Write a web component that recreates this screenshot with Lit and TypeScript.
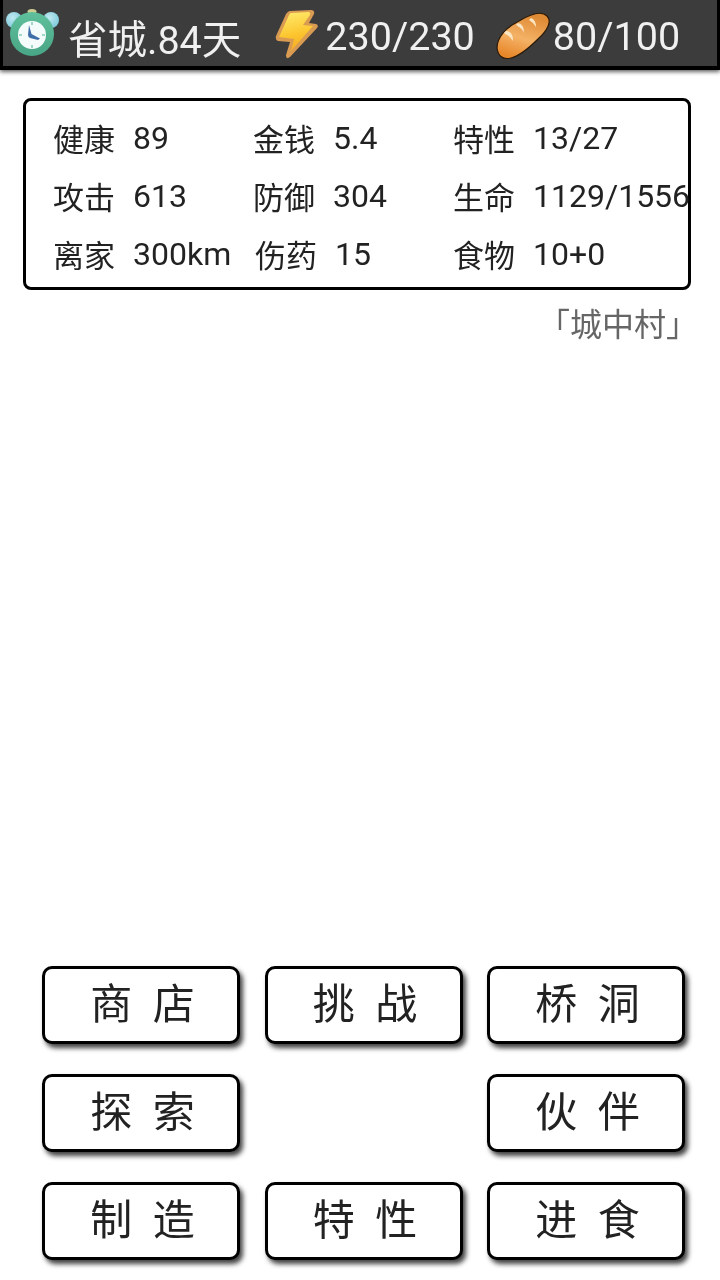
import { LitElement, html, css, svg } from "lit";
import { customElement } from "lit/decorators.js";

const STATS: [string, string][] = [
  ["健康", "89"], ["金钱", "5.4"], ["特性", "13/27"],
  ["攻击", "613"], ["防御", "304"], ["生命", "1129/1556"],
  ["离家", "300km"], ["伤药", "15"], ["食物", "10+0"],
];
const BUTTONS = ["商 店", "挑 战", "桥 洞", "探 索", "", "伙 伴", "制 造", "特 性", "进 食"];

const clock = svg`<svg class="ic-clock" viewBox="4 9 56 48">
  <defs>
    <radialGradient id="bell" cx=".4" cy=".35" r=".7"><stop offset="0" stop-color="#bfe9f0"/><stop offset="1" stop-color="#7cc8da"/></radialGradient>
    <linearGradient id="ring" x1="0" y1="0" x2="0" y2="1"><stop offset="0" stop-color="#5fc09c"/><stop offset="1" stop-color="#48a585"/></linearGradient>
  </defs>
  <ellipse cx="32" cy="11.5" rx="4.5" ry="2.5" fill="#d0cb8e"/>
  <circle cx="14" cy="20" r="8" fill="url(#bell)"/>
  <circle cx="51" cy="20" r="8" fill="url(#bell)"/>
  <circle cx="32" cy="34" r="22" fill="url(#ring)"/>
  <circle cx="32" cy="35" r="14" fill="#f4fbfb"/>
  <path d="M29 25 L31.5 34 L40 38.5 L38 40 L30 38 Q28 37 28 35 Z" fill="#3f6fa8"/>
  <g fill="#9fd8c8"><rect x="31" y="22" width="2" height="3"/><rect x="31" y="45" width="2" height="3"/><rect x="19" y="34" width="3" height="2"/><rect x="42" y="34" width="3" height="2"/></g>
</svg>`;

const bolt = svg`<svg class="ic-bolt" viewBox="273 9 46 50">
  <defs><linearGradient id="bo" gradientUnits="userSpaceOnUse" x1="290" y1="12" x2="300" y2="52"><stop offset="0" stop-color="#ffe96a"/><stop offset=".55" stop-color="#fcc62f"/><stop offset="1" stop-color="#f5a623"/></linearGradient></defs>
  <path d="M290 11 L311 10 Q315 10 314 14 L309 23 L316 24 Q319 25 317 28 L290 57 Q286 60 286 55 L290 42 L278 41 Q275 40 276 36 L286 14 Q288 11 290 11 Z" fill="#d99a52"/>
  <path d="M291 13 L309 12 Q311 13 310 15 L303 25 L313 26 L291 51 L294 39 L279 37 L289 15 Q290 13 291 13 Z" fill="url(#bo)"/>
</svg>`;

const bread = svg`<svg class="ic-bread" viewBox="494 11 56 50">
  <defs><linearGradient id="br" gradientUnits="userSpaceOnUse" x1="528" y1="14" x2="514" y2="58"><stop offset="0" stop-color="#df8a34"/><stop offset=".55" stop-color="#f4b266"/><stop offset="1" stop-color="#e8872a"/></linearGradient></defs>
  <path d="M496 48 C496 38 504 28 518 21 C528 15 540 10 546 16 C551 21 547 30 537 39 C528 48 518 56 510 58 C502 60 497 56 496 48 Z" fill="url(#br)" stroke="#2b1a08" stroke-width="1.2"/>
  <g fill="#fbe6c4"><path d="M505 31 Q512 31 512 41 Q509 36 503 33 Z"/><path d="M517 23 Q523 24 523 33 Q521 28 515 25 Z"/><path d="M530 18 Q535 20 535 27 Q533 23 528 20 Z"/></g>
</svg>`;

@customElement("app-root")
export class AppRoot extends LitElement {
  static styles = css`
    :host {
      display: flex;
      flex-direction: column;
      width: 720px;
      height: 1280px;
      background: #fff;
      font-family: Roboto, "Noto Sans CJK SC", sans-serif;
      overflow: hidden;
      filter: blur(0.4px);
    }
    .top {
      box-sizing: border-box;
      height: 70px;
      background: #3c3c3c;
      border: 3px solid #000;
      border-top: 0;
      border-bottom-width: 4px;
      box-shadow: 0 2px 4px rgba(0, 0, 0, 0.6);
      display: flex;
      align-items: center;
      color: #f0f0f0;
      font-size: 39.5px;
      white-space: nowrap;
    }
    .top span { padding-top: 7px; }
    .ic-clock { width: 56px; height: 48px; margin-left: 1px; margin-right: 8px; flex: none; }
    .ic-bolt { width: 46px; height: 50px; margin: 2px 6px 0 32px; flex: none; }
    .ic-bread { width: 56px; height: 50px; margin: 6px 2px 0 20px; flex: none; }
    .panel {
      box-sizing: border-box;
      margin: 28px 29px 0 23px;
      height: 192px;
      border: 3px solid #000;
      border-radius: 8px;
      display: grid;
      grid-template-columns: 200px 200px 1fr;
      grid-auto-rows: 58px;
      padding: 8px 0 0 27px;
      font-size: 32px;
      color: #222;
      white-space: nowrap;
    }
    .cell { display: flex; align-items: center; gap: 18px; }
    .cell .k { font-size: 31px; margin-top: -2px; }
    .cell.pushed { margin-left: 2px; }
    .place {
      margin: 12px 22px 0 0;
      text-align: right;
      font-size: 32px;
      line-height: 46px;
      color: #666;
    }
    .grid {
      margin: auto 0 20px 42px;
      display: grid;
      grid-template-columns: 198px 198px 198px;
      grid-auto-rows: 78px;
      column-gap: 24.5px;
      row-gap: 30px;
    }
    .btn {
      box-sizing: border-box;
      border: 3px solid #000;
      border-radius: 10px;
      background: #fff;
      box-shadow: 3px 4px 5px rgba(0, 0, 0, 0.75);
      display: flex;
      align-items: center;
      justify-content: center;
      padding: 0 0 10px 3px;
      font-size: 42px;
      color: #222;
      word-spacing: 10px;
    }
  `;

  render() {
    return html`
      <div class="top">
        ${clock}<span>省城.84天</span>
        ${bolt}<span>230/230</span>
        ${bread}<span>80/100</span>
      </div>
      <div class="panel">
        ${STATS.map(([k, v]) => html`<div class="cell ${k === "伤药" ? "pushed" : ""}"><span class="k">${k}</span><span>${v}</span></div>`)}
      </div>
      <div class="place">「城中村」</div>
      <div class="grid">
        ${BUTTONS.map((b) => (b ? html`<div class="btn">${b}</div>` : html`<div></div>`))}
      </div>
    `;
  }
}
